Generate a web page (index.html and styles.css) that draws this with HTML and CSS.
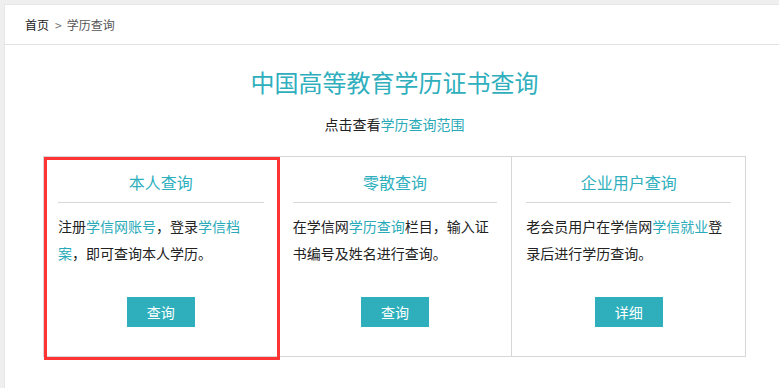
FILE: index.html
```html
<!DOCTYPE html>
<html lang="zh-CN">
<head>
<meta charset="utf-8">
<title>学历查询</title>
<link rel="stylesheet" href="styles.css">
</head>
<body>
<div class="crumb">
  <a class="crumb-home" href="#">首页</a><span class="crumb-sep">&gt;</span><span class="crumb-cur">学历查询</span>
</div>
<div class="main">
  <div class="wrap">
    <h1 class="title">中国高等教育学历证书查询</h1>
    <p class="sub">点击查看<a href="#" class="link">学历查询范围</a></p>
    <div class="cards">
      <div class="card card-first">
        <h2 class="card-title">本人查询</h2>
        <p class="card-text">注册<a href="#" class="link">学信网账号</a>，登录<a href="#" class="link">学信档案</a>，即可查询本人学历。</p>
        <a href="#" class="btn">查询</a>
        <div class="highlight"></div>
      </div>
      <div class="card">
        <h2 class="card-title">零散查询</h2>
        <p class="card-text">在学信网<a href="#" class="link">学历查询</a>栏目，输入证书编号及姓名进行查询。</p>
        <a href="#" class="btn">查询</a>
      </div>
      <div class="card">
        <h2 class="card-title">企业用户查询</h2>
        <p class="card-text">老会员用户在学信网<a href="#" class="link">学信就业</a>登录后进行学历查询。</p>
        <a href="#" class="btn">详细</a>
      </div>
    </div>
  </div>
</div>
</body>
</html>
```

FILE: styles.css
```css
* { box-sizing: border-box; }
html, body { margin: 0; padding: 0; }
body {
  background: #efefef;
  padding: 4px 0 0 4px;
  font-family: "Microsoft YaHei", "Noto Sans CJK SC", "Noto Sans", sans-serif;
  color: #333;
  height: 388px;
  overflow: hidden;
}
a { text-decoration: none; }
.crumb {
  background: #fff;
  border-top: 1px solid #e6e6e6;
  border-left: 1px solid #e6e6e6;
  border-bottom: 1px solid #e2e2e2;
  height: 41px;
  line-height: 39px;
  padding-left: 20px;
  font-size: 12px;
}
.crumb-home { color: #222; }
.crumb-sep { color: #777; margin: 0 5px 0 6px; }
.crumb-cur { color: #555; }
.main {
  background: #fff;
  border-left: 1px solid #e6e6e6;
  height: 343px;
  padding-top: 21px;
}
.wrap {
  width: 703px;
  margin-left: 38px;
}
.title {
  margin: 0;
  font-size: 24px;
  line-height: 32px;
  font-weight: normal;
  color: #2fafbd;
  text-align: center;
}
.sub {
  margin: 16px 0 0;
  font-size: 14px;
  line-height: 20px;
  text-align: center;
  color: #222;
}
.link { color: #2aaab8; }
.cards {
  margin-top: 22px;
  border: 1px solid #d6d6d6;
  display: grid;
  grid-template-columns: 1fr 1fr 1fr;
}
.card {
  padding: 0 14px 29px;
  text-align: center;
}
.card + .card { border-left: 1px solid #d6d6d6; }
.card-first { position: relative; }
.card-title {
  margin: 0;
  padding: 13px 0 8px;
  font-size: 16px;
  line-height: 24px;
  font-weight: normal;
  color: #2fafbd;
  border-bottom: 1px solid #d8d8d8;
}
.card-text {
  margin: 10px 0 0;
  font-size: 14px;
  line-height: 27px;
  text-align: left;
  color: #222;
  height: 54px;
}
.btn {
  display: inline-block;
  margin-top: 30px;
  width: 68px;
  height: 30px;
  line-height: 30px;
  background: #2eafbb;
  color: #fff;
  font-size: 14px;
  vertical-align: top;
}
.highlight {
  position: absolute;
  left: 0;
  top: 0;
  width: 236px;
  height: 203px;
  border: 3px solid #ff3434;
  pointer-events: none;
}
```
